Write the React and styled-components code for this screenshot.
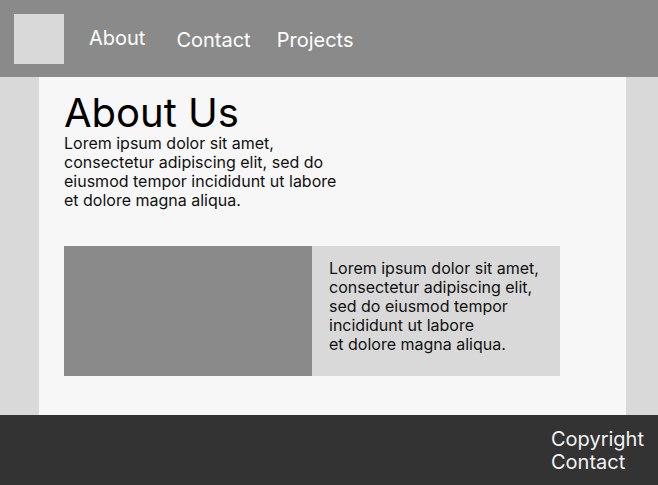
import React from 'react';
import styled, { createGlobalStyle } from 'styled-components';

const GlobalStyle = createGlobalStyle`
  html, body {
    margin: 0;
    padding: 0;
  }
  body {
    font-family: Inter, "Noto Sans", sans-serif;
    background: #d9d9d9;
  }
`;

const Page = styled.div`
  display: flex;
  flex-direction: column;
  height: 100vh;
`;

const Header = styled.header`
  flex: 0 0 77px;
  background: #8a8a8a;
  display: flex;
  align-items: center;
  padding-left: 14px;
  box-sizing: border-box;
`;

const Logo = styled.div`
  width: 50px;
  height: 50px;
  background: #d9d9d9;
`;

const Nav = styled.nav`
  display: flex;
  align-items: center;
  margin-left: 25px;
`;

const NavLink = styled.a`
  color: #ffffff;
  font-size: 20px;
  text-decoration: none;
  margin-right: ${(p) => p.$gap || 0}px;
  position: relative;
  top: ${(p) => p.$shift || 0}px;
`;

const Main = styled.main`
  flex: 1;
  min-height: 0;
  display: flex;
  padding: 0 32px 0 39px;
`;

const Panel = styled.section`
  flex: 1;
  background: #f7f7f7;
  padding: 15px 25px 0;
`;

const Title = styled.h1`
  margin: 0;
  font-size: 40px;
  font-weight: 400;
  line-height: 42px;
  color: #000;
`;

const Text = styled.p`
  margin: 0;
  font-size: 16px;
  line-height: 19px;
  color: #111;
`;

const Card = styled.div`
  display: flex;
  width: 496px;
  height: 130px;
  margin-top: 36px;
`;

const CardImage = styled.div`
  flex: 0 0 248px;
  background: #8a8a8a;
`;

const CardBody = styled.div`
  flex: 0 0 248px;
  box-sizing: border-box;
  background: #d9d9d9;
  padding: 13px 17px;
`;

const Footer = styled.footer`
  flex: 0 0 70px;
  background: #333333;
  display: flex;
  justify-content: flex-end;
  padding: 13px 14px 0 0;
  box-sizing: border-box;
`;

const FooterLinks = styled.div`
  display: flex;
  flex-direction: column;
  color: #f2f2f2;
  font-size: 20px;
  line-height: 23px;
`;

export default function App() {
  return (
    <>
      <GlobalStyle />
      <Page>
        <Header>
          <Logo />
          <Nav>
            <NavLink href="#" $gap={31} $shift={-1}>About</NavLink>
            <NavLink href="#" $gap={26} $shift={1}>Contact</NavLink>
            <NavLink href="#" $shift={1}>Projects</NavLink>
          </Nav>
        </Header>
        <Main>
          <Panel>
            <Title>About Us</Title>
            <Text>
              Lorem ipsum dolor sit amet,<br />
              consectetur adipiscing elit, sed do<br />
              eiusmod tempor incididunt ut labore<br />
              et dolore magna aliqua.
            </Text>
            <Card>
              <CardImage />
              <CardBody>
                <Text>
                  Lorem ipsum dolor sit amet,<br />
                  consectetur adipiscing elit,<br />
                  sed do eiusmod tempor<br />
                  incididunt ut labore<br />
                  et dolore magna aliqua.
                </Text>
              </CardBody>
            </Card>
          </Panel>
        </Main>
        <Footer>
          <FooterLinks>
            <span>Copyright</span>
            <span>Contact</span>
          </FooterLinks>
        </Footer>
      </Page>
    </>
  );
}
